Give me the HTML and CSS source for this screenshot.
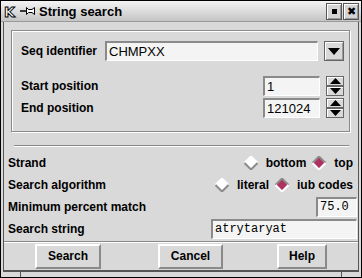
FILE: index.html
```html
<!DOCTYPE html>
<html lang="en">
<head>
  <meta charset="UTF-8" />
  <title>String search</title>
  <link rel="stylesheet" href="styles.css">
</head>
<body>
  <div class="window">
    <div class="titlebar">
      <svg class="logo" width="16" height="18" viewBox="0 0 16 18">
        <text x="2" y="15" class="logo-k">K</text>
      </svg>
      <svg class="pin" width="16" height="10" viewBox="0 0 16 10">
        <line x1="0" y1="5" x2="6" y2="5" stroke="#000" stroke-width="1.5" />
        <path d="M6.5 1.5 L8.5 3.5 L12 3.5 L14.5 1.5 L14.5 8.5 L12 6.5 L8.5 6.5 L6.5 8.5 Z" fill="#fff" stroke="#000" stroke-width="1" />
      </svg>
      <span class="title">String search</span>
      <span class="wm-buttons">
        <span class="wm-btn"><span class="dot"></span></span>
        <span class="wm-btn close">✖</span>
      </span>
    </div>

    <div class="client">
      <div class="group">
        <div class="seq-row">
          <span class="label">Seq identifier</span>
          <span class="entry seq-entry">CHMPXX</span>
          <span class="drop-btn"><svg width="12" height="8" viewBox="0 0 12 8"><path d="M0 0 L12 0 L6 7 Z" fill="#000"/></svg></span>
        </div>
        <div class="spin-row">
          <span class="label">Start position</span>
          <span class="entry num-entry">1</span>
          <span class="spin">
            <span class="arrow up"><svg width="11" height="6" viewBox="0 0 11 6"><path d="M0 6 L11 6 L5.5 0 Z" fill="#000"/></svg></span>
            <span class="arrow down"><svg width="11" height="6" viewBox="0 0 11 6"><path d="M0 0 L11 0 L5.5 6 Z" fill="#000"/></svg></span>
          </span>
        </div>
        <div class="spin-row">
          <span class="label">End position</span>
          <span class="entry num-entry">121024</span>
          <span class="spin">
            <span class="arrow up"><svg width="11" height="6" viewBox="0 0 11 6"><path d="M0 6 L11 6 L5.5 0 Z" fill="#000"/></svg></span>
            <span class="arrow down"><svg width="11" height="6" viewBox="0 0 11 6"><path d="M0 0 L11 0 L5.5 6 Z" fill="#000"/></svg></span>
          </span>
        </div>
      </div>

      <div class="separator"></div>

      <div class="form-row">
        <span class="label">Strand</span>
        <span class="radios">
          <span class="radio"><svg width="14" height="14" viewBox="0 0 14 14"><path d="M7 0.5 L13.5 7 L7 13.5 L0.5 7 Z" fill="#fff"/><path d="M0.5 7 L7 0.5 L13.5 7" fill="none" stroke="#fff" stroke-width="2"/><path d="M0.5 7 L7 13.5 L13.5 7" fill="none" stroke="#8a8a8a" stroke-width="2"/></svg>bottom</span>
          <span class="radio"><svg width="14" height="14" viewBox="0 0 14 14"><path d="M7 0.5 L13.5 7 L7 13.5 L0.5 7 Z" fill="#b03060"/><path d="M0.5 7 L7 0.5 L13.5 7" fill="none" stroke="#8a8a8a" stroke-width="2"/><path d="M0.5 7 L7 13.5 L13.5 7" fill="none" stroke="#fff" stroke-width="2"/></svg>top</span>
        </span>
      </div>
      <div class="form-row">
        <span class="label">Search algorithm</span>
        <span class="radios">
          <span class="radio"><svg width="14" height="14" viewBox="0 0 14 14"><path d="M7 0.5 L13.5 7 L7 13.5 L0.5 7 Z" fill="#fff"/><path d="M0.5 7 L7 0.5 L13.5 7" fill="none" stroke="#fff" stroke-width="2"/><path d="M0.5 7 L7 13.5 L13.5 7" fill="none" stroke="#8a8a8a" stroke-width="2"/></svg>literal</span>
          <span class="radio"><svg width="14" height="14" viewBox="0 0 14 14"><path d="M7 0.5 L13.5 7 L7 13.5 L0.5 7 Z" fill="#b03060"/><path d="M0.5 7 L7 0.5 L13.5 7" fill="none" stroke="#8a8a8a" stroke-width="2"/><path d="M0.5 7 L7 13.5 L13.5 7" fill="none" stroke="#fff" stroke-width="2"/></svg>iub codes</span>
        </span>
      </div>
      <div class="form-row">
        <span class="label">Minimum percent match</span>
        <span class="entry mono pct-entry">75.0</span>
      </div>
      <div class="form-row">
        <span class="label">Search string</span>
        <span class="entry mono str-entry">atrytaryat</span>
      </div>

      <div class="button-bar">
        <span class="button search">Search</span>
        <span class="button cancel">Cancel</span>
        <span class="button help">Help</span>
      </div>
    </div>

    <div class="bottom-bar">
      <span class="grip"></span>
      <span class="grip-mid"></span>
      <span class="grip"></span>
    </div>
  </div>
</body>
</html>
```

FILE: styles.css
```css
* { box-sizing: border-box; }
body {
  margin: 0;
  font-family: "Liberation Sans", Arial, sans-serif;
  font-size: 12px;
  background: #d9d9d9;
}
.window {
  width: 362px;
  height: 278px;
  border: 1px solid #000;
  background: #d9d9d9;
  display: flex;
  flex-direction: column;
  overflow: hidden;
}
.titlebar {
  height: 21px;
  flex: none;
  display: flex;
  align-items: center;
  padding: 0 2px 0 1px;
  background: linear-gradient(#f4f4f4, #c4c4c4);
  border-bottom: 1px solid #9a9a9a;
}
.logo {
  margin-right: 2px;
  overflow: visible;
}
.logo-k {
  font-family: "DejaVu Sans", sans-serif;
  font-weight: bold;
  font-size: 14px;
  fill: #fff;
  stroke: #000;
  stroke-width: 1;
}
.pin { margin-right: 3px; }
.title {
  font-weight: bold;
  font-size: 13px;
  flex: 1;
}
.wm-buttons {
  display: flex;
  gap: 1px;
}
.wm-btn {
  width: 16px;
  height: 17px;
  border: 1px solid #555;
  box-shadow: inset 1px 1px 0 #fff, inset -1px -1px 0 #999;
  background: #d4d4d4;
  display: flex;
  align-items: center;
  justify-content: center;
  font-size: 11px;
}
.dot {
  width: 5px;
  height: 5px;
  background: #000;
}
.client {
  flex: 1;
  margin: 0 2px;
  border-left: 1px solid #555;
  border-right: 1px solid #555;
  border-bottom: 1px solid #555;
  display: flex;
  flex-direction: column;
}
.group {
  margin: 8px 8px 0 7px;
  height: 102px;
  border: 1px solid #8a8a8a;
  box-shadow: inset 1px 1px 0 #fff, 1px 1px 0 #fff;
  padding: 9px 4px 0 9px;
}
.label {
  font-weight: bold;
  font-size: 12px;
  color: #000;
}
.entry {
  height: 20px;
  background: #f4f4f4;
  border-top: 2px solid #8a8a8a;
  border-left: 2px solid #8a8a8a;
  border-bottom: 1px solid #fff;
  border-right: 1px solid #fff;
  padding: 0 2px;
  font-size: 13px;
  line-height: 17px;
  white-space: nowrap;
}
.mono {
  font-family: "Liberation Mono", "DejaVu Sans Mono", monospace;
  font-size: 12px;
}
.seq-row {
  display: flex;
  align-items: center;
  height: 21px;
}
.seq-row .label { width: 84px; }
.seq-entry {
  width: 213px;
  margin-right: 6px;
}
.drop-btn {
  width: 20px;
  height: 20px;
  border: 1px solid #666;
  box-shadow: inset 1px 1px 0 #fff, inset -1px -1px 0 #999;
  background: #d9d9d9;
  display: flex;
  align-items: center;
  justify-content: center;
  padding-top: 2px;
}
.spin-row {
  display: flex;
  align-items: center;
  height: 21px;
  margin-top: 1px;
}
.seq-row + .spin-row { margin-top: 14px; }
.spin-row .label { flex: 1; }
.num-entry {
  width: 57px;
  margin-right: 6px;
}
.spin {
  width: 18px;
  margin-right: 1px;
  display: flex;
  flex-direction: column;
}
.arrow {
  height: 10px;
  border: 1px solid #666;
  box-shadow: inset 1px 1px 0 #fff;
  background: #d9d9d9;
  display: flex;
  align-items: center;
  justify-content: center;
}
.separator {
  margin: 13px 9px 5px 10px;
  height: 2px;
  border-top: 1px solid #8a8a8a;
  border-bottom: 1px solid #fff;
}
.form-row {
  display: flex;
  align-items: center;
  justify-content: space-between;
  height: 21px;
  padding: 0 1px 0 4px;
  margin-bottom: 1px;
}
.radios {
  display: flex;
  gap: 6px;
  font-weight: bold;
  padding-right: 4px;
}
.radio {
  display: flex;
  align-items: center;
  gap: 8px;
}
.pct-entry { width: 41px; }
.str-entry { width: 146px; }
.button-bar {
  margin-top: 1px;
  border-top: 1px solid #8a8a8a;
  box-shadow: inset 0 1px 0 #fff;
  flex: 1;
  display: flex;
  align-items: center;
  padding: 0 0 0 31px;
}
.button {
  height: 25px;
  border-top: 2px solid #fff;
  border-left: 2px solid #fff;
  border-right: 2px solid #8a8a8a;
  border-bottom: 2px solid #8a8a8a;
  display: flex;
  align-items: center;
  justify-content: center;
  font-weight: bold;
}
.search { width: 66px; }
.cancel { width: 65px; margin-left: 57px; }
.help { width: 50px; margin-left: 54px; }
.bottom-bar {
  height: 6px;
  flex: none;
  display: flex;
  border-top: 1px solid #555;
  margin: 0 2px;
}
.grip {
  width: 18px;
  border-right: 1px solid #555;
}
.grip:last-child {
  border-right: none;
  border-left: 1px solid #555;
}
.grip-mid { flex: 1; }
```
